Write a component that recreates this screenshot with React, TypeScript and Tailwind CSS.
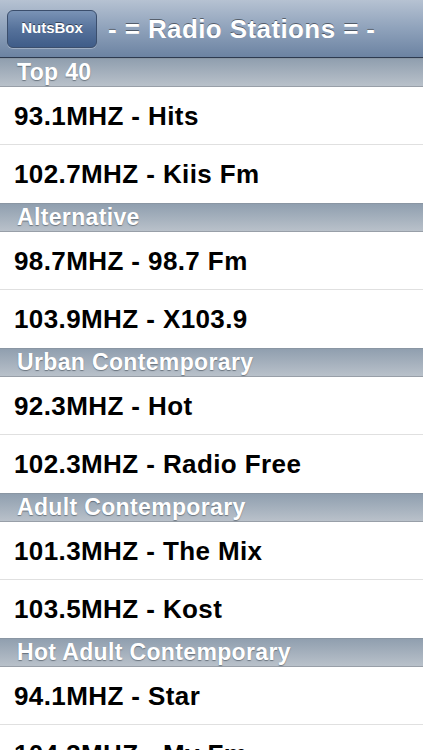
import React from 'react';

interface Section {
  title: string;
  stations: string[];
}

const sections: Section[] = [
  { title: 'Top 40', stations: ['93.1MHZ - Hits', '102.7MHZ - Kiis Fm'] },
  { title: 'Alternative', stations: ['98.7MHZ - 98.7 Fm', '103.9MHZ - X103.9'] },
  { title: 'Urban Contemporary', stations: ['92.3MHZ - Hot', '102.3MHZ - Radio Free'] },
  { title: 'Adult Contemporary', stations: ['101.3MHZ - The Mix', '103.5MHZ - Kost'] },
  { title: 'Hot Adult Contemporary', stations: ['94.1MHZ - Star', '104.3MHZ - My Fm'] },
];

const NavBar: React.FC = () => (
  <div className="h-[58px] flex items-center gap-[11px] px-[7px] bg-gradient-to-b from-[#b6c2d2] via-[#8fa2bb] to-[#6c83a2] border-b border-[#2d3a4f] shrink-0">
    <button className="h-[38px] w-[90px] shrink-0 rounded-[6px] border border-[#3b4e6c] bg-gradient-to-b from-[#7a93b6] via-[#56729b] to-[#3f5c88] text-white text-[15px] font-bold [text-shadow:0_-1px_0_rgba(0,0,0,0.45)] shadow-[0_1px_0_rgba(255,255,255,0.3)]">
      NutsBox
    </button>
    <h1 className="text-white text-[26px] font-bold leading-none tracking-[0.4px] whitespace-nowrap [text-shadow:0_-1px_0_rgba(0,0,0,0.45)]">
      - = Radio Stations = -
    </h1>
  </div>
);

const SectionHeader: React.FC<{ title: string }> = ({ title }) => (
  <div className="h-[29px] flex items-center px-[17px] bg-gradient-to-b from-[#909faf] to-[#b9c1ca] border-t border-[#8a96a3] border-b border-b-[#989fa8]">
    <span className="text-white text-[23px] font-bold leading-none tracking-[0.35px] whitespace-nowrap [text-shadow:0_1px_1px_rgba(60,70,80,0.6)]">
      {title}
    </span>
  </div>
);

const StationRow: React.FC<{ name: string; last: boolean }> = ({ name, last }) => (
  <div className={`h-[58px] flex items-center px-[14px] bg-white ${last ? '' : 'border-b border-[#e0e0e0]'}`}>
    <span className="text-black text-[26px] font-bold leading-none tracking-[0.4px] whitespace-nowrap">{name}</span>
  </div>
);

const App: React.FC = () => {
  return (
    <div className="w-[423px] h-[750px] overflow-hidden flex flex-col bg-white font-['Liberation_Sans',Arial,sans-serif]">
      <NavBar />
      <div className="flex flex-col">
        {sections.map(section => (
          <div key={section.title} className="flex flex-col">
            <SectionHeader title={section.title} />
            {section.stations.map((s, i) => (
              <StationRow key={s} name={s} last={i === section.stations.length - 1} />
            ))}
          </div>
        ))}
      </div>
    </div>
  );
};

export default App;
